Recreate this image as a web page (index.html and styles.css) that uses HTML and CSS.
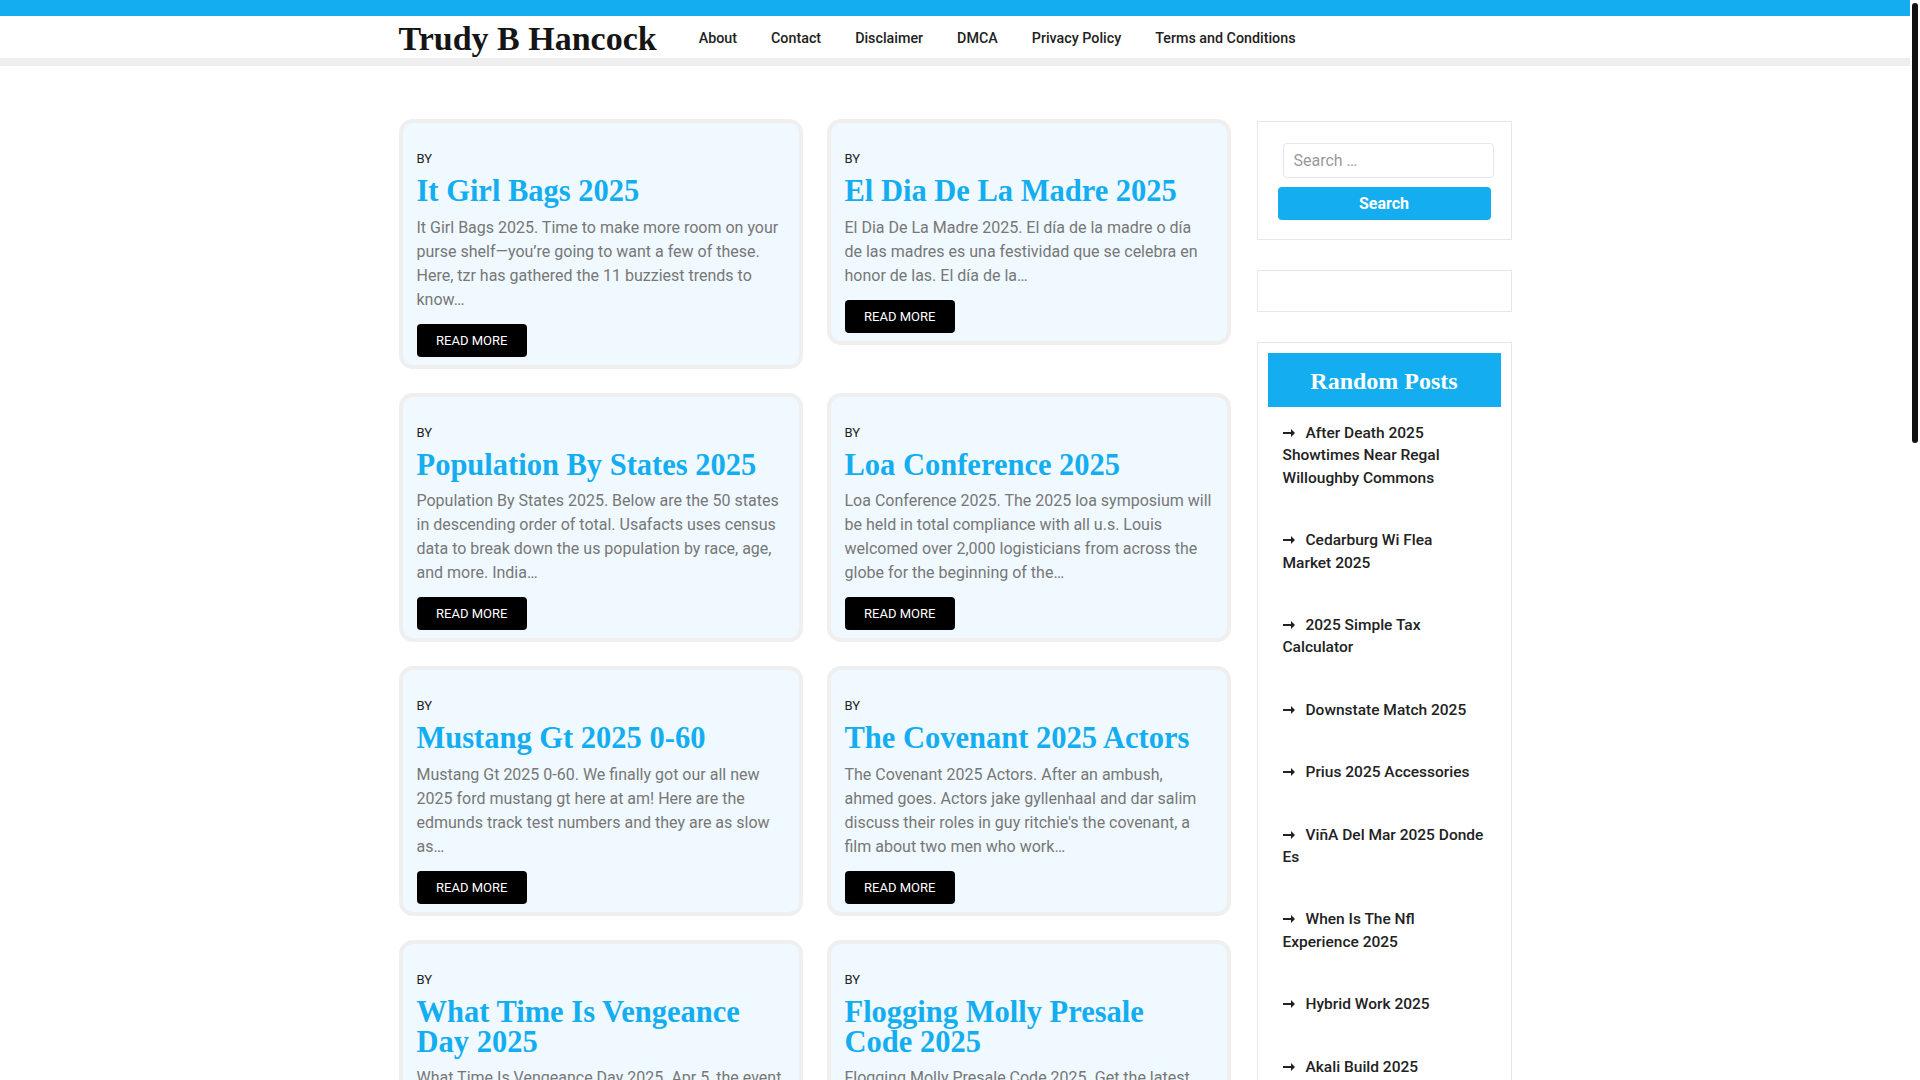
FILE: index.html
```html
<!DOCTYPE html>
<html lang="en">
<head>
<meta charset="utf-8">
<title>Trudy B Hancock</title>
<link rel="stylesheet" href="styles.css">
</head>
<body>
<div class="topbar"></div>
<header class="site-header">
  <div class="container header-inner">
    <a class="site-title" href="#">Trudy B Hancock</a>
    <nav class="main-nav">
      <a href="#">About</a>
      <a href="#">Contact</a>
      <a href="#">Disclaimer</a>
      <a href="#">DMCA</a>
      <a href="#">Privacy Policy</a>
      <a href="#">Terms and Conditions</a>
    </nav>
  </div>
</header>
<div class="header-rule"></div>

<div class="container content">
  <main class="main">
    <div class="posts">
      <article class="card">
        <div class="byline">BY</div>
        <h2 class="entry-title">It Girl Bags 2025</h2>
        <p class="excerpt">It Girl Bags 2025. Time to make more room on your purse shelf—you’re going to want a few of these. Here, tzr has gathered the 11 buzziest trends to know…</p>
        <a class="read-more" href="#">READ MORE</a>
      </article>
      <article class="card">
        <div class="byline">BY</div>
        <h2 class="entry-title">El Dia De La Madre 2025</h2>
        <p class="excerpt">El Dia De La Madre 2025. El día de la madre o día de las madres es una festividad que se celebra en honor de las. El día de la…</p>
        <a class="read-more" href="#">READ MORE</a>
      </article>
      <article class="card">
        <div class="byline">BY</div>
        <h2 class="entry-title">Population By States 2025</h2>
        <p class="excerpt">Population By States 2025. Below are the 50 states in descending order of total. Usafacts uses census data to break down the us population by race, age, and more. India…</p>
        <a class="read-more" href="#">READ MORE</a>
      </article>
      <article class="card">
        <div class="byline">BY</div>
        <h2 class="entry-title">Loa Conference 2025</h2>
        <p class="excerpt">Loa Conference 2025. The 2025 loa symposium will be held in total compliance with all u.s. Louis welcomed over 2,000 logisticians from across the globe for the beginning of the…</p>
        <a class="read-more" href="#">READ MORE</a>
      </article>
      <article class="card">
        <div class="byline">BY</div>
        <h2 class="entry-title">Mustang Gt 2025 0-60</h2>
        <p class="excerpt">Mustang Gt 2025 0-60. We finally got our all new 2025 ford mustang gt here at am! Here are the edmunds track test numbers and they are as slow as…</p>
        <a class="read-more" href="#">READ MORE</a>
      </article>
      <article class="card">
        <div class="byline">BY</div>
        <h2 class="entry-title">The Covenant 2025 Actors</h2>
        <p class="excerpt">The Covenant 2025 Actors. After an ambush, ahmed goes. Actors jake gyllenhaal and dar salim discuss their roles in guy ritchie's the covenant, a film about two men who work…</p>
        <a class="read-more" href="#">READ MORE</a>
      </article>
      <article class="card">
        <div class="byline">BY</div>
        <h2 class="entry-title">What Time Is Vengeance Day 2025</h2>
        <p class="excerpt">What Time Is Vengeance Day 2025. Apr 5, the event kicks off in the evening and the full card is streamed live for fans around the world…</p>
        <a class="read-more" href="#">READ MORE</a>
      </article>
      <article class="card">
        <div class="byline">BY</div>
        <h2 class="entry-title">Flogging Molly Presale Code 2025</h2>
        <p class="excerpt">Flogging Molly Presale Code 2025. Get the latest presale passwords and ticket details before the general sale begins for the tour…</p>
        <a class="read-more" href="#">READ MORE</a>
      </article>
    </div>
  </main>

  <aside class="sidebar">
    <section class="widget widget-search">
      <form class="search-form">
        <input class="search-field" type="search" placeholder="Search …">
        <button class="search-submit" type="button">Search</button>
      </form>
    </section>
    <section class="widget widget-empty"></section>
    <section class="widget widget-posts">
      <h3 class="widget-title">Random Posts</h3>
      <ul class="post-list">
        <li><a href="#"><svg class="arrow" viewBox="0 0 12 8" width="12" height="8"><path d="M0 3h8V0l4 4-4 4V5H0z"/></svg>After Death 2025<br>Showtimes Near Regal<br>Willoughby Commons</a></li>
        <li><a href="#"><svg class="arrow" viewBox="0 0 12 8" width="12" height="8"><path d="M0 3h8V0l4 4-4 4V5H0z"/></svg>Cedarburg Wi Flea<br>Market 2025</a></li>
        <li><a href="#"><svg class="arrow" viewBox="0 0 12 8" width="12" height="8"><path d="M0 3h8V0l4 4-4 4V5H0z"/></svg>2025 Simple Tax<br>Calculator</a></li>
        <li><a href="#"><svg class="arrow" viewBox="0 0 12 8" width="12" height="8"><path d="M0 3h8V0l4 4-4 4V5H0z"/></svg>Downstate Match 2025</a></li>
        <li><a href="#"><svg class="arrow" viewBox="0 0 12 8" width="12" height="8"><path d="M0 3h8V0l4 4-4 4V5H0z"/></svg>Prius 2025 Accessories</a></li>
        <li><a href="#"><svg class="arrow" viewBox="0 0 12 8" width="12" height="8"><path d="M0 3h8V0l4 4-4 4V5H0z"/></svg>ViñA Del Mar 2025 Donde<br>Es</a></li>
        <li><a href="#"><svg class="arrow" viewBox="0 0 12 8" width="12" height="8"><path d="M0 3h8V0l4 4-4 4V5H0z"/></svg>When Is The Nfl<br>Experience 2025</a></li>
        <li><a href="#"><svg class="arrow" viewBox="0 0 12 8" width="12" height="8"><path d="M0 3h8V0l4 4-4 4V5H0z"/></svg>Hybrid Work 2025</a></li>
        <li><a href="#"><svg class="arrow" viewBox="0 0 12 8" width="12" height="8"><path d="M0 3h8V0l4 4-4 4V5H0z"/></svg>Akali Build 2025</a></li>
      </ul>
    </section>
  </aside>
</div>

<div class="scrollbar"><div class="scrollbar-thumb"></div></div>
</body>
</html>
```

FILE: styles.css
```css
html { background: #fff; }
body {
  margin: 0;
  padding-right: 10px;
  font-family: Roboto, "Noto Sans", "Liberation Sans", sans-serif;
  color: #222;
  background: #fff;
  overflow: hidden;
}
a { text-decoration: none; color: inherit; }

.scrollbar {
  position: fixed;
  top: 0;
  right: 0;
  width: 10px;
  height: 100vh;
  background: #fff;
}
.scrollbar-thumb {
  margin: 3px 2px 0;
  height: 440px;
  background: #111;
  border-radius: 3px;
}

.container {
  width: 1113px;
  margin: 0 auto;
}

.topbar {
  height: 16px;
  background: #14aef0;
}
.site-header { background: #fff; }
.header-inner {
  height: 42px;
  display: flex;
  align-items: flex-start;
}
.site-title {
  font-family: "Liberation Serif", "Times New Roman", serif;
  font-weight: 700;
  font-size: 34px;
  line-height: 42px;
  color: #151515;
  margin-right: 25px;
  margin-top: 2px;
}
.main-nav { display: flex; }
.main-nav a {
  font-size: 14.3px;
  font-weight: 500;
  color: #222;
  padding: 1px 17px 0;
  line-height: 42px;
}
.header-rule {
  height: 8px;
  background: #eeeeee;
}

.content {
  display: flex;
  align-items: flex-start;
  gap: 26px;
  padding-top: 53px;
}
.main { width: 832px; }
.posts {
  display: grid;
  grid-template-columns: 404px 404px;
  column-gap: 24px;
  row-gap: 24px;
  align-items: start;
}
.card {
  border: 4px solid #efefef;
  border-radius: 14px;
  background: #eff9ff;
  padding: 26px 14px 8px;
}
.byline {
  font-size: 13px;
  line-height: 20px;
  color: #222;
}
.entry-title {
  margin: 7px 0 9.5px;
  font-family: "Liberation Serif", "Times New Roman", serif;
  font-weight: 700;
  font-size: 30.5px;
  line-height: 30px;
  color: #14aef0;
}
.excerpt {
  margin: 0;
  font-size: 16px;
  line-height: 24px;
  color: #777;
}
.read-more {
  display: inline-block;
  margin-top: 12px;
  height: 33px;
  line-height: 33px;
  padding: 0 19.5px;
  background: #000;
  color: #fff;
  font-size: 13px;
  border-radius: 4px;
}

.sidebar {
  width: 255px;
  margin-top: 2px;
}
.widget {
  border: 1px solid #e6e6ec;
  margin-bottom: 30px;
  box-sizing: border-box;
}
.search-form {
  padding: 21px 20px 19px;
  display: flex;
  flex-direction: column;
  gap: 9px;
}
.search-field {
  box-sizing: border-box;
  width: 211px;
  height: 35px;
  margin-left: 5px;
  border: 1px solid #e6e6ee;
  border-radius: 4px;
  padding: 0 10px;
  font-family: Roboto, "Noto Sans", sans-serif;
  font-size: 16px;
  color: #555;
  outline: none;
}
.search-field::placeholder { color: #9a9a9a; }
.search-submit {
  width: 213px;
  height: 33px;
  border: 0;
  border-radius: 4px;
  background: #14aef0;
  color: #fff;
  font-family: Roboto, "Noto Sans", sans-serif;
  font-weight: 700;
  font-size: 16px;
}
.widget-empty { height: 42px; }
.widget-title {
  margin: 10px;
  height: 54px;
  line-height: 56px;
  background: #14aef0;
  color: #fff;
  text-align: center;
  font-family: "Liberation Serif", "Times New Roman", serif;
  font-weight: 700;
  font-size: 24px;
}
.post-list {
  list-style: none;
  margin: 0;
  padding: 5px 12px 0 25px;
}
.post-list li {
  font-size: 15.5px;
  font-weight: 500;
  line-height: 22.4px;
  color: #222;
  margin-bottom: 40px;
  white-space: nowrap;
}
.arrow {
  fill: #222;
  margin-right: 11px;
  vertical-align: 1px;
}
```
